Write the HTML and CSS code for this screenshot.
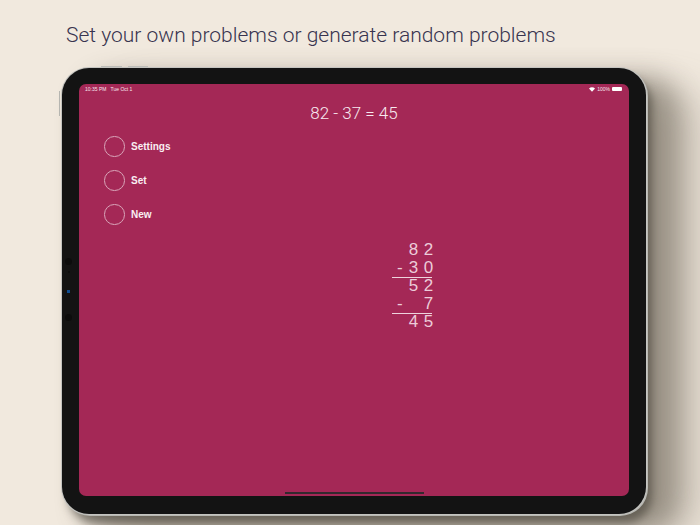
FILE: index.html
```html
<!DOCTYPE html>
<html lang="en">
<head>
<meta charset="utf-8">
<title>Set your own problems</title>
<link rel="stylesheet" href="styles.css">
</head>
<body>
<h1 class="headline">Set your own problems or generate random problems</h1>
<div class="device">
  <span class="top-btn top-btn-a"></span>
  <span class="top-btn top-btn-b"></span>
  <span class="side-btn"></span>
  <span class="sensor sensor-a"></span>
  <span class="sensor sensor-b"></span>
  <span class="sensor sensor-c"></span>
  <span class="sensor sensor-d"></span>
  <main class="screen">
    <div class="status">
      <span class="status-time">10:35 PM&nbsp;&nbsp;&nbsp;Tue Oct 1</span>
      <span class="status-right">
        <svg class="wifi" viewBox="0 0 12 9" width="6" height="5"><path d="M6 9 L0 2.6 C3.4 -.6 8.6 -.6 12 2.6 Z" fill="#fff"/></svg>
        <span>100%</span>
        <span class="battery"></span>
      </span>
    </div>
    <div class="equation">82 - 37 = 45</div>
    <ul class="menu">
      <li class="menu-item"><span class="circle"></span><span>Settings</span></li>
      <li class="menu-item"><span class="circle"></span><span>Set</span></li>
      <li class="menu-item"><span class="circle"></span><span>New</span></li>
    </ul>
    <div class="work">
      <div class="work-row"><span class="digits">8 2</span></div>
      <div class="work-row work-rule"><span class="dash">-</span><span class="digits">3 0</span></div>
      <div class="work-row"><span class="digits">5 2</span></div>
      <div class="work-row work-rule"><span class="dash">-</span><span class="digits">7</span></div>
      <div class="work-row"><span class="digits">4 5</span></div>
    </div>
    <div class="spacer"></div>
    <div class="home-bar"></div>
  </main>
</div>
</body>
</html>
```
FILE: styles.css
```css
* { box-sizing: border-box; }
html, body { margin: 0; height: 525px; overflow: hidden; }
body {
  background: #f1e9de;
  font-family: "Liberation Sans", Arial, sans-serif;
}
.headline {
  margin: 0;
  padding: 22px 0 0 66px;
  height: 68px;
  font-family: Roboto, "Liberation Sans", sans-serif;
  font-size: 21px;
  line-height: 26px;
  font-weight: 300;
  color: #38344f;
  white-space: nowrap;
}
.device {
  position: relative;
  margin-left: 62px;
  width: 584px;
  height: 446px;
  padding: 16px 17px 18px;
  background: #131313;
  border-radius: 27px;
  box-shadow:
    0 0 0 1px #c4c4c0,
    1px 1px 0 1px #b8b8b3,
    6px 9px 8px 0 rgba(60, 56, 48, .55),
    26px 14px 26px 6px rgba(90, 84, 70, .45),
    56px 22px 40px 0 rgba(120, 110, 95, .3);
  display: flex;
}
.top-btn {
  position: absolute;
  top: -2px;
  height: 1px;
  background: #bdbdb8;
}
.top-btn-a { left: 39px; width: 21px; }
.top-btn-b { left: 66px; width: 20px; }
.side-btn {
  position: absolute;
  left: -3px;
  top: 23px;
  width: 1px;
  height: 25px;
  background: #b5b5b0;
}
.sensor {
  position: absolute;
  left: 3px;
  border-radius: 50%;
  background: #0c0c0c;
}
.sensor-a { top: 190px; width: 7px; height: 7px; }
.sensor-b { top: 203px; left: 6px; width: 2px; height: 2px; }
.sensor-c { top: 222px; left: 5px; width: 3px; height: 3px; border-radius: 0; background: #0f4d92; }
.sensor-d { top: 246px; width: 7px; height: 7px; }
.screen {
  flex: 1;
  background: #a42856;
  border-radius: 7px;
  color: #fff;
  display: flex;
  flex-direction: column;
  align-items: stretch;
}
.status {
  display: flex;
  justify-content: space-between;
  align-items: center;
  padding: 0 7px 0 6px;
  height: 10px;
  font-size: 5px;
  line-height: 8px;
  color: #f6e6ec;
}
.status-right { display: flex; align-items: center; gap: 2px; }
.battery {
  width: 10px;
  height: 4px;
  display: block;
  background: #fff;
  border-radius: 1px;
}
.equation {
  margin-top: 8px;
  text-align: center;
  font-family: Roboto, "Liberation Sans", sans-serif;
  font-weight: 300;
  font-size: 17px;
  line-height: 22px;
  color: #f8eaf0;
}
.menu {
  list-style: none;
  margin: 12px 0 0 25px;
  padding: 0;
  display: flex;
  flex-direction: column;
  gap: 12.9px;
}
.menu-item {
  display: flex;
  align-items: center;
  gap: 6.5px;
  font-size: 10px;
  font-weight: 700;
  height: 21px;
  color: #f9eef2;
}
.circle {
  width: 20.5px;
  height: 20.5px;
  border: 1px solid #d9a5b9;
  border-radius: 50%;
}
.work {
  margin: 17.2px 0 0 313px;
  width: 40px;
  font-size: 17px;
  line-height: 16px;
  color: #ecccd9;
  letter-spacing: 0.4px;
}
.work-row {
  height: 18px;
  display: flex;
  justify-content: flex-end;
}
.digits { margin-right: -1.5px; }
.work-rule {
  border-bottom: 1px solid #eed3dd;
  justify-content: space-between;
  padding-left: 5px;
}
.spacer { flex: 1; }
.home-bar {
  align-self: center;
  width: 139px;
  height: 2px;
  margin-bottom: 2px;
  background: #33292e;
}
```
